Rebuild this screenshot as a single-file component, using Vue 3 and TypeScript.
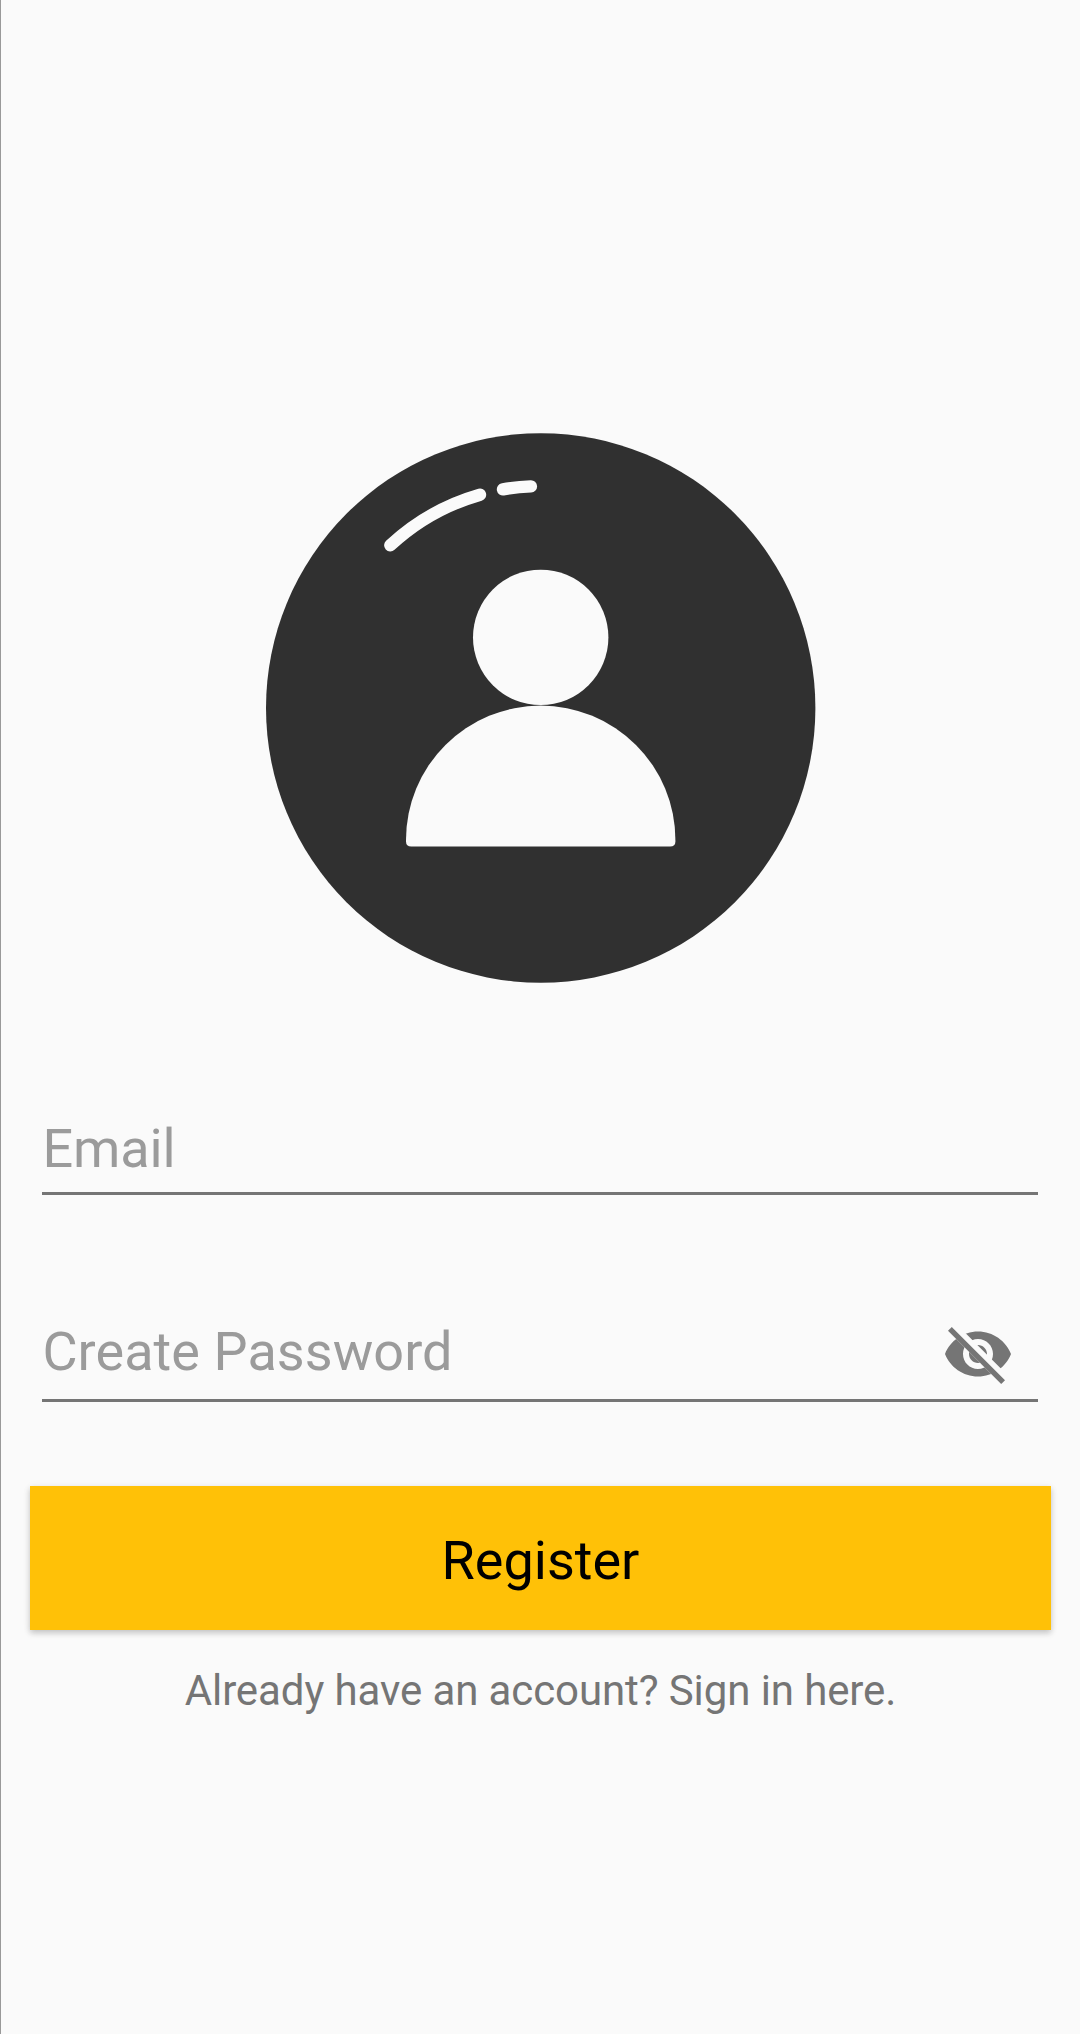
<script setup lang="ts">
interface Field {
  id: string
  label: string
  secret: boolean
}

const fields: Field[] = [
  { id: 'email', label: 'Email', secret: false },
  { id: 'password', label: 'Create Password', secret: true },
]
</script>

<template>
  <main class="screen">
    <svg class="avatar" viewBox="0 0 550 550" aria-hidden="true">
      <circle cx="274.7" cy="275" r="274.7" fill="#303030" />
      <circle cx="274.7" cy="204.4" r="67.7" fill="#fafafa" />
      <path
        d="M140 407A134.7 134.4 0 0 1 409.4 407V408.4Q409.4 413.5 404.1 413.5H145.3Q140 413.5 140 408.4Z"
        fill="#fafafa"
      />
      <g fill="none" stroke="#fafafa" stroke-width="12.4" stroke-linecap="round">
        <path d="M124.3 112.3A221.8 221.8 0 0 1 214 61.7" />
        <path d="M237 56.4A221.8 221.8 0 0 1 264.9 53.4" />
      </g>
    </svg>

    <form class="form" @submit.prevent>
      <div v-for="field in fields" :key="field.id" class="field" :class="field.id">
        <span class="hint">{{ field.label }}</span>
        <svg v-if="field.secret" class="toggle" viewBox="0 0 24 24" aria-hidden="true">
          <defs>
            <clipPath id="strike-gap">
              <path d="M2 4.27L19.73 22L22.27 19.46L4.54 1.73V1H23V23H1V4.27Z" />
            </clipPath>
          </defs>
          <path
            clip-path="url(#strike-gap)"
            fill="#757575"
            d="M12 4.5C7 4.5 2.73 7.61 1 12c1.73 4.39 6 7.5 11 7.5s9.27-3.11 11-7.5c-1.73-4.39-6-7.5-11-7.5zM12 17c-2.76 0-5-2.24-5-5s2.24-5 5-5 5 2.24 5 5-2.24 5-5 5zM12 9c-1.66 0-3 1.34-3 3s1.34 3 3 3 3-1.34 3-3-1.34-3-3-3z"
          />
          <path d="M3.27 4.27L19.74 20.74" stroke="#757575" stroke-width="1.8" stroke-linecap="square" />
        </svg>
      </div>
      <button class="register" type="submit">Register</button>
    </form>

    <p class="signin">Already have an account? Sign in here.</p>
  </main>
</template>

<style>
body {
  background: #fafafa;
}
</style>

<style scoped>
.screen {
  box-sizing: border-box;
  display: flex;
  flex-direction: column;
  width: 1080px;
  height: 2034px;
  padding-top: 433px;
  border-left: 1px solid #999;
  background: #fafafa;
  font-family: Roboto, 'Liberation Sans', sans-serif;
  overflow: hidden;
}

.avatar {
  flex: none;
  width: 550px;
  height: 550px;
  margin-left: 265px;
}

.form {
  display: flex;
  flex-direction: column;
}

.field {
  box-sizing: border-box;
  display: flex;
  align-items: flex-start;
  justify-content: space-between;
  margin: 0 42px 0 41.4px;
  border-bottom: 3px solid #757575;
}

.email {
  height: 95px;
  margin-top: 117px;
}

.password {
  height: 95px;
  margin-top: 112px;
}

.email .hint {
  margin-top: 17px;
}

.hint {
  margin-top: 13px;
  color: #9b9b9b;
  font-size: 54px;
  line-height: 64px;
  white-space: nowrap;
}

.email .hint {
  letter-spacing: -0.1px;
}

.password .hint {
  letter-spacing: 0.07px;
}

.toggle {
  flex: none;
  width: 72px;
  height: 72px;
  margin: 11px 24px 0 0;
}

.register {
  height: 144px;
  margin: 84px 29px 0;
  padding: 5px 0 0;
  border: 0;
  background: #ffc107;
  box-shadow: 0 3px 6px rgba(0, 0, 0, 0.2), 0 1px 9px rgba(0, 0, 0, 0.05);
  color: #000;
  font-family: inherit;
  font-size: 54px;
  line-height: 64px;
}

.signin {
  margin: 36px 0 0;
  color: #757575;
  font-size: 42px;
  letter-spacing: -0.1px;
  line-height: 50px;
  text-align: center;
  white-space: nowrap;
}
</style>
